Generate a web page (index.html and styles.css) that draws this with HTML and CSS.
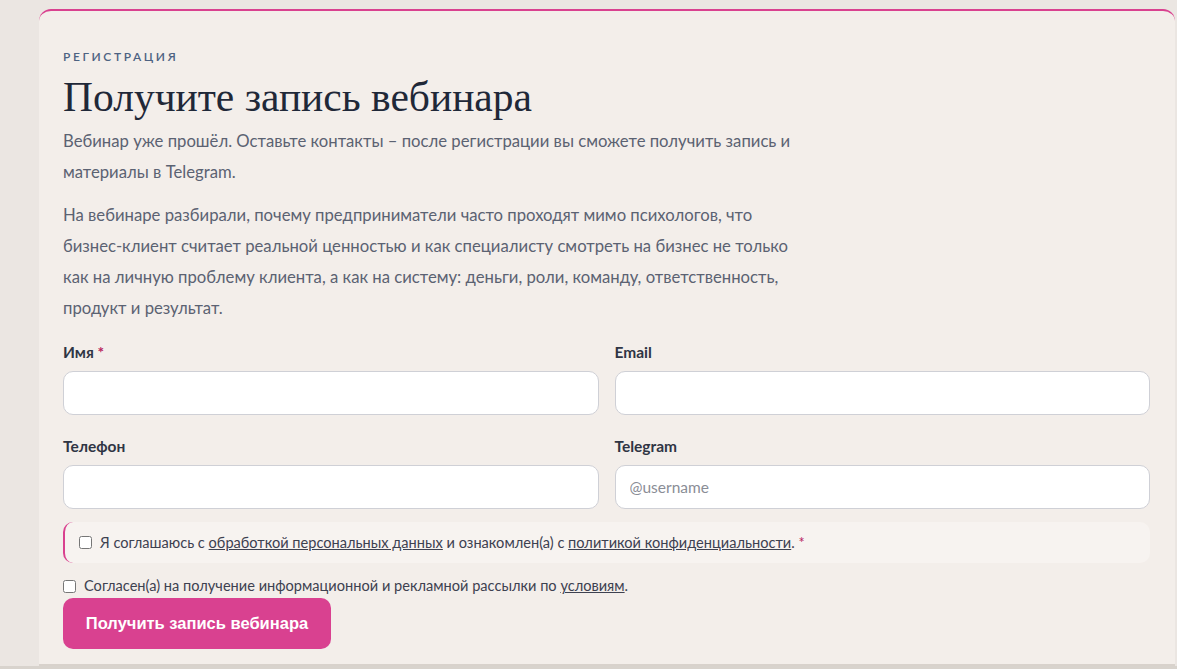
FILE: index.html
```html
<!DOCTYPE html>
<html>
<head>
    <title>Получите запись вебинара</title>
    <link rel="stylesheet" href="styles.css">
</head>
<body>
    <div class="card">
        <div class="kicker">Регистрация</div>
        <h1>Получите запись вебинара</h1>
        <p class="lead">Вебинар уже прошёл. Оставьте контакты – после регистрации вы сможете получить запись и материалы в Telegram.</p>
        <p class="lead">На вебинаре разбирали, почему предприниматели часто проходят мимо психологов, что бизнес-клиент считает реальной ценностью и как специалисту смотреть на бизнес не только как на личную проблему клиента, а как на систему: деньги, роли, команду, ответственность, продукт и результат.</p>

        <form class="form" onsubmit="return false">
            <div class="grid">
                <div class="field">
                    <label for="name">Имя <span class="req">*</span></label>
                    <input type="text" id="name">
                </div>
                <div class="field">
                    <label for="email">Email</label>
                    <input type="text" id="email">
                </div>
                <div class="field">
                    <label for="phone">Телефон</label>
                    <input type="text" id="phone">
                </div>
                <div class="field">
                    <label for="tg">Telegram</label>
                    <input type="text" id="tg" placeholder="@username">
                </div>
            </div>

            <label class="consent required">
                <input type="checkbox">
                <span>Я соглашаюсь с <a href="#">обработкой персональных данных</a> и ознакомлен(а) с <a href="#">политикой конфиденциальности</a>. <span class="req">*</span></span>
            </label>
            <label class="consent">
                <input type="checkbox">
                <span>Согласен(а) на получение информационной и рекламной рассылки по <a href="#">условиям</a>.</span>
            </label>

            <button type="submit">Получить запись вебинара</button>
        </form>
    </div>
    <div class="bottom-bar"></div>
</body>
</html>
```

FILE: styles.css
```css
html, body {
    margin: 0;
    padding: 0;
}
body {
    background-color: #ebe6e2;
    font-family: Lato, "Noto Sans", sans-serif;
    color: #5b6272;
    height: 669px;
    overflow: hidden;
}
.card {
    margin: 9px 2px 0 39px;
    background-color: #f3eeea;
    border-top: 2px solid #d9418f;
    border-radius: 12px 12px 0 0;
    padding: 38px 25px 14px 24px;
    height: 601px;
    border-bottom: 2px solid #d8d2cc;
}
.kicker {
    font-size: 12px;
    line-height: 16px;
    letter-spacing: 2.6px;
    text-transform: uppercase;
    color: #4d6282;
    font-weight: 600;
}
h1 {
    font-family: "Liberation Serif", serif;
    font-weight: normal;
    font-size: 41.5px;
    line-height: 48px;
    color: #1f2838;
    margin: 8px 0 5px;
}
.lead {
    font-size: 16.7px;
    line-height: 31px;
    max-width: 740px;
    margin: 0 0 12px;
}
.form {
    margin-top: 18px;
}
.grid {
    display: grid;
    grid-template-columns: 1fr 1fr;
    column-gap: 16px;
    row-gap: 21px;
}
.field label {
    display: block;
    font-size: 15.5px;
    line-height: 20px;
    font-weight: bold;
    color: #2f3544;
    margin-bottom: 9px;
}
.req {
    color: #b8245f;
}
.field input {
    width: 100%;
    height: 44px;
    box-sizing: border-box;
    border: 1px solid #cfd0d6;
    border-radius: 10px;
    background: white;
    padding: 0 14px;
    font-family: Lato, sans-serif;
    font-size: 15.5px;
}
.field input::placeholder {
    color: #8a8d96;
}
.consent {
    display: flex;
    align-items: center;
    gap: 8px;
    font-size: 14.6px;
    line-height: 20px;
    color: #3d4150;
}
.consent input {
    margin: 0;
    width: 13px;
    height: 13px;
}
.consent a {
    color: #3d4150;
}
.consent.required {
    margin-top: 13px;
    height: 41px;
    box-sizing: border-box;
    padding-left: 14px;
    background-color: #f7f3f0;
    border-left: 2px solid #d9418f;
    border-radius: 10px;
    margin-bottom: 13px;
}
button {
    margin-top: 2px;
    width: 268px;
    height: 51px;
    background-color: #d94190;
    color: white;
    border: none;
    border-radius: 10px;
    font-family: "Liberation Sans", Arial, sans-serif;
    font-weight: bold;
    font-size: 16.5px;
    cursor: pointer;
}
button:hover {
    background-color: #c23380;
}
.bottom-bar {
    height: 10px;
    background-color: #d8d3cd;
}
```
